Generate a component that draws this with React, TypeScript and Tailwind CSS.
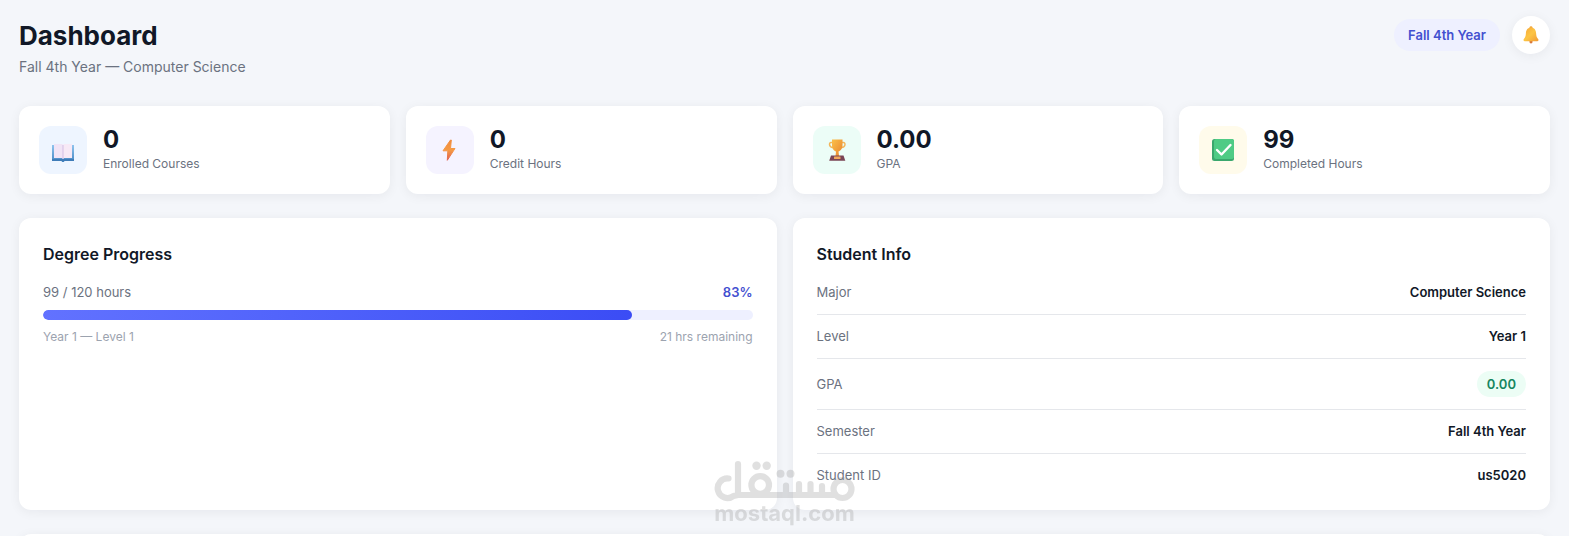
import React from 'react';

const BookIcon = () => (
  <svg viewBox="0 0 24 24" className="h-6 w-6" aria-hidden="true">
    <defs>
      <linearGradient id="cover" x1="0" y1="0" x2="0" y2="1">
        <stop offset="0" stopColor="#8fc4ee" />
        <stop offset="1" stopColor="#4485c2" />
      </linearGradient>
    </defs>
    <path d="M1.500 7H23v16h-9.500L12 24.500 10.500 23h-9.500V7z" fill="url(#cover)" />
    <path d="M1 21h22v2h-9.500L12 24l-1.500-1H1z" fill="#3f7cb8" />
    <path d="M3 6h8l1 1v14l-1-1H3z" fill="#f1e4f6" />
    <path d="M21 6h-8l-1 1v14l1-1h8z" fill="#f7e9f6" />
    <path d="M12 7v14" stroke="#d3bfe4" strokeWidth="1" />
  </svg>
);

const BoltIcon = () => (
  <svg viewBox="0 0 24 24" className="h-6 w-6" aria-hidden="true">
    <defs>
      <linearGradient id="bolt" x1="0" y1="0" x2="0" y2="1">
        <stop offset="0" stopColor="#f08a3c" />
        <stop offset="0.500" stopColor="#f59a45" />
        <stop offset="1" stopColor="#e0604f" />
      </linearGradient>
    </defs>
    <path d="M12.500 2L5 12.800h4.800L9.300 22.300 17 10.500h-4.500L13.300 2z" fill="url(#bolt)" stroke="url(#bolt)" strokeWidth="1" strokeLinejoin="round" />
  </svg>
);

const TrophyIcon = () => (
  <svg viewBox="0 0 24 24" className="h-6 w-6" aria-hidden="true">
    <defs>
      <linearGradient id="cup" x1="0" y1="0" x2="1" y2="1">
        <stop offset="0" stopColor="#fbc04a" />
        <stop offset="1" stopColor="#e8842f" />
      </linearGradient>
    </defs>
    <path d="M7.500 4.500H6C4 4.500 3.500 9 8 9.500M17 4.500h1.500c2 0 2.500 4.500-2 5" fill="none" stroke="#f3b65a" strokeWidth="1.500" />
    <path d="M7 1.500h10.500V7c0 4-2.200 6-4 6.500L14 18h-3.500l.5-4.500C9.200 13 7 11 7 7z" fill="url(#cup)" />
    <path d="M6 17.500h12.500l1.800 5.300H4.200z" fill="#7a4455" />
    <rect x="9" y="18.500" width="6.500" height="2.500" rx="0.500" fill="#f2a65a" />
  </svg>
);

const CheckIcon = () => (
  <svg viewBox="0 0 24 24" className="h-6 w-6" aria-hidden="true">
    <rect x="1" y="1" width="22" height="22" rx="2.500" fill="#3aa76d" />
    <rect x="3" y="1" width="20" height="20" rx="2" fill="#4fcb85" />
    <path d="M6 12l4.500 4.500L19.500 7" fill="none" stroke="#fff" strokeWidth="2.400" strokeLinecap="round" strokeLinejoin="round" />
  </svg>
);

const BellIcon = () => (
  <svg viewBox="0 0 18 18" className="h-[18px] w-[18px]" aria-hidden="true">
    <defs>
      <linearGradient id="bell" x1="0" y1="0" x2="1" y2="1">
        <stop offset="0" stopColor="#f6a63a" />
        <stop offset="0.500" stopColor="#fcc544" />
        <stop offset="1" stopColor="#f19a35" />
      </linearGradient>
    </defs>
    <circle cx="9" cy="15.800" r="1.600" fill="#d9773a" />
    <circle cx="9" cy="1.600" r="1.400" fill="#f0a33a" />
    <path d="M9 1.500c3.200 0 4.900 2.400 5.100 5.800.2 3 .6 4.200 2 5.700.8.900.3 2.200-.7 2.200H2.600c-1 0-1.500-1.300-.7-2.200 1.400-1.500 1.800-2.700 2-5.700C4.100 3.900 5.800 1.500 9 1.500z" fill="url(#bell)" />
  </svg>
);

const stats = [
  { value: '0', label: 'Enrolled Courses', tint: 'bg-[#eef5ff]', icon: <BookIcon /> },
  { value: '0', label: 'Credit Hours', tint: 'bg-[#f5f3ff]', icon: <BoltIcon /> },
  { value: '0.00', label: 'GPA', tint: 'bg-[#ecfdf7]', icon: <TrophyIcon /> },
  { value: '99', label: 'Completed Hours', tint: 'bg-[#fffbeb]', icon: <CheckIcon /> },
];

const info = [
  { label: 'Major', value: 'Computer Science' },
  { label: 'Level', value: 'Year 1' },
  { label: 'GPA', value: '0.00', badge: true },
  { label: 'Semester', value: 'Fall 4th Year' },
  { label: 'Student ID', value: 'us5020' },
];

const card = 'rounded-xl bg-white shadow-[0_2px_12px_rgba(15,23,42,0.06)]';

const Watermark = () => (
  <div className="pointer-events-none fixed bottom-3 left-1/2 flex w-[142px] -translate-x-1/2 flex-col items-center text-[#9a9a9a] opacity-30">
    <svg viewBox="0 0 142 43" className="h-[43px] w-[142px]" fill="none" stroke="currentColor" strokeWidth="6.200" strokeLinecap="round" strokeLinejoin="round" aria-hidden="true">
      <path d="M14.500 19.500A9.800 9.800 0 1 0 19.500 37L24 36H120M24 5V36" />
      <circle cx="46.200" cy="26" r="8.800" />
      <path d="M72 26.500V36M85 25V36M96.500 25V36M108 27V36" />
      <circle cx="128.500" cy="30" r="9" />
      <g fill="currentColor" stroke="none">
        <circle cx="42.500" cy="6.700" r="4.200" />
        <circle cx="52.700" cy="6.700" r="4.200" />
        <circle cx="66.500" cy="14.700" r="4" />
        <circle cx="76.500" cy="14.700" r="4" />
      </g>
    </svg>
    <span className="text-[22px] leading-[22px] font-bold">mostaql.com</span>
  </div>
);

const App: React.FC = () => {
  const done = 99;
  const total = 120;
  const percent = Math.round((done / total) * 100);

  return (
    <main className="h-screen overflow-hidden bg-[#f4f6fa] px-[19px] pt-4 font-['Inter',sans-serif] text-[#111827]">
      <header className="mb-[29px] flex items-start justify-between">
        <div>
          <h1 className="text-[26px] leading-[39px] font-bold">Dashboard</h1>
          <p className="mt-0.5 text-sm leading-5 text-[#6b7280]">Fall 4th Year — Computer Science</p>
        </div>
        <div className="flex items-center gap-3">
          <span className="rounded-full bg-[#eef0ff] px-3.5 py-1.5 text-[13px] leading-5 font-semibold text-[#4350d0]">Fall 4th Year</span>
          <button aria-label="Notifications" className="flex h-[38px] w-[38px] items-center justify-center rounded-full bg-white shadow-[0_2px_12px_rgba(15,23,42,0.06)]">
            <BellIcon />
          </button>
        </div>
      </header>

      <section className="mb-6 grid grid-cols-4 gap-4">
        {stats.map(s => (
          <div key={s.label} className={`${card} flex items-center gap-4 p-5`}>
            <div className={`flex h-12 w-12 items-center justify-center rounded-xl ${s.tint}`}>{s.icon}</div>
            <div>
              <div className="text-2xl leading-7 font-bold">{s.value}</div>
              <div className="text-xs leading-5 text-[#6b7280]">{s.label}</div>
            </div>
          </div>
        ))}
      </section>

      <div className="mb-6 grid grid-cols-2 gap-4">
        <section className={`${card} p-6`}>
          <h2 className="mb-4 text-base leading-6 font-semibold">Degree Progress</h2>
          <div className="flex justify-between text-[13px] leading-5">
            <span className="text-[#6b7280]">{done} / {total} hours</span>
            <span className="font-semibold text-[#4350d0]">{percent}%</span>
          </div>
          <div className="my-2 h-2.5 overflow-hidden rounded-full bg-[#eef0ff]">
            <div className="h-full rounded-full bg-linear-to-r from-[#6272ff] to-[#3b4cf5]" style={{ width: `${percent}%` }}></div>
          </div>
          <div className="flex justify-between text-xs leading-[18px] text-[#9ca3af]">
            <span>Year 1 — Level 1</span>
            <span>{total - done} hrs remaining</span>
          </div>
        </section>

        <section className={`${card} px-6 pt-6 pb-[25px]`}>
          <h2 className="mb-[5px] text-base leading-6 font-semibold">Student Info</h2>
          <dl className="text-[13px] leading-[19px]">
            {info.map(row => (
              <div key={row.label} className="flex items-center justify-between border-b border-[#e5e7eb] py-3 last:border-b-0 last:pb-0">
                <dt className="text-[#6b7280]">{row.label}</dt>
                {row.badge ? (
                  <dd className="rounded-full bg-[#ecfdf5] px-2.5 py-[3px] leading-5 font-semibold text-[#16865f]">{row.value}</dd>
                ) : (
                  <dd className="font-semibold">{row.value}</dd>
                )}
              </div>
            ))}
          </dl>
        </section>
      </div>

      {/* Next card starts just above the fold */}
      <section className={`${card} h-24`}></section>
      <Watermark />
    </main>
  );
};

export default App;
